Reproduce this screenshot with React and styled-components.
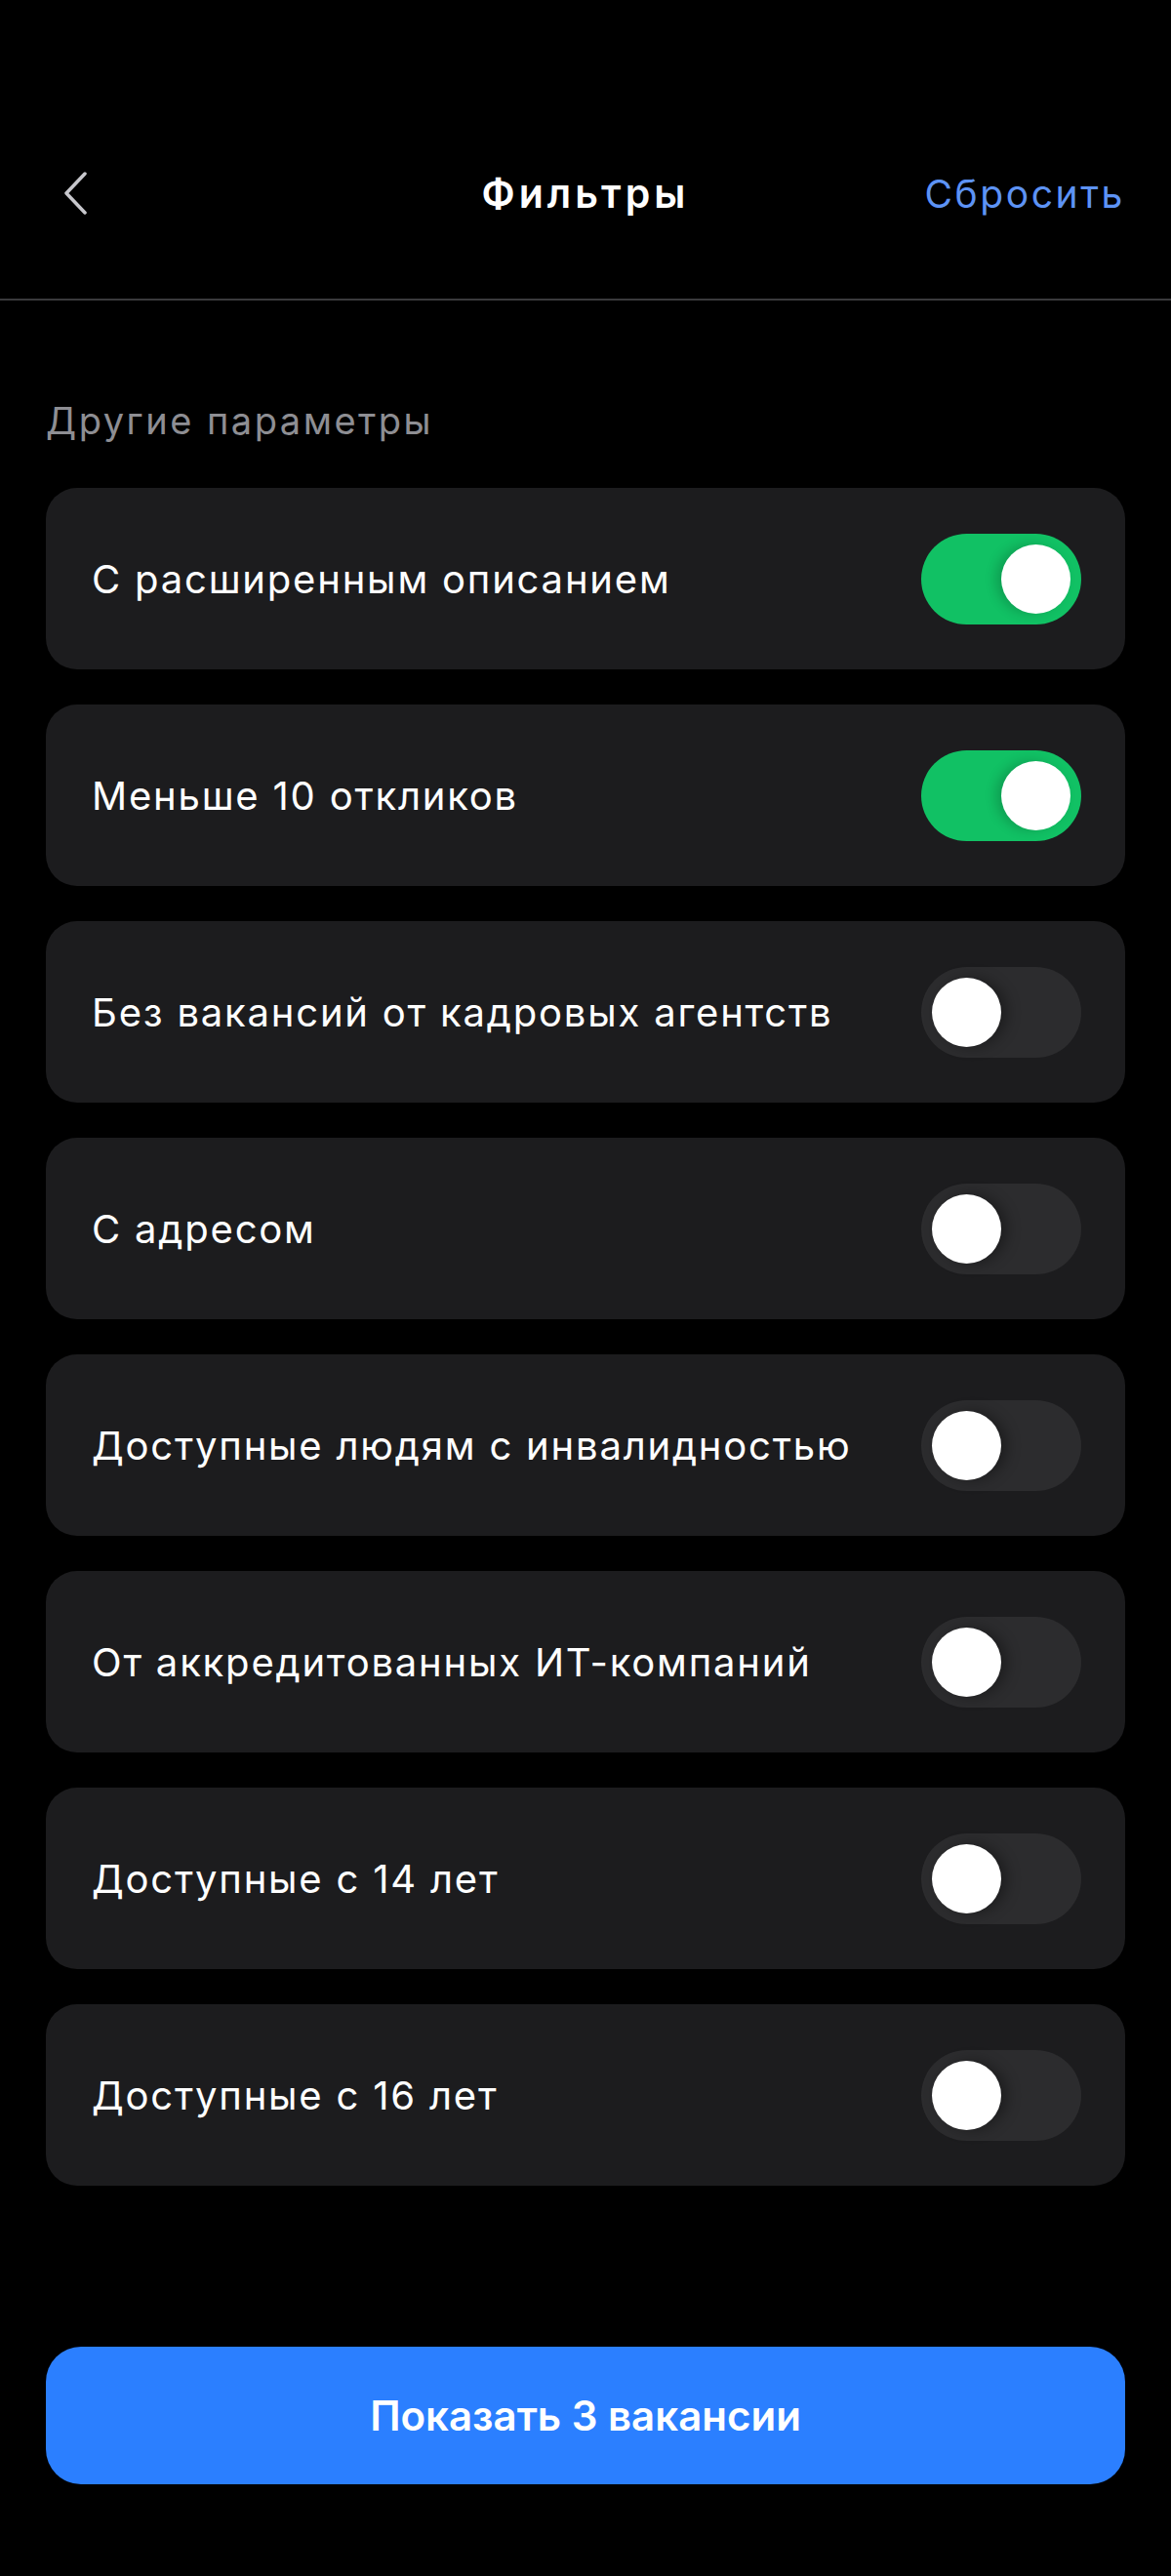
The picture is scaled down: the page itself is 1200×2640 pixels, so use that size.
import React, { useState } from "react";
import styled, { createGlobalStyle } from "styled-components";

const Global = createGlobalStyle`
  html, body { margin: 0; padding: 0; background: #000; }
  body { font-family: Inter, "Noto Sans", sans-serif; -webkit-font-smoothing: antialiased; }
  * { box-sizing: border-box; }
`;

const Page = styled.div`
  width: 1200px;
  min-height: 2640px;
  background: #000;
  color: #fff;
  display: flex;
  flex-direction: column;
`;

const Header = styled.header`
  height: 308px;
  padding: 90px 47px 0;
  border-bottom: 2px solid #3a3a3c;
  display: grid;
  grid-template-columns: 1fr auto 1fr;
  align-items: center;
`;

const BackButton = styled.button`
  justify-self: start;
  background: none;
  border: 0;
  padding: 0 0 0 18px;
  display: flex;
  align-items: center;
  cursor: pointer;
`;

const Title = styled.h1`
  margin: 0;
  font-size: 41px;
  font-weight: 600;
  color: #fff;
  letter-spacing: 4px;
`;

const Reset = styled.button`
  justify-self: end;
  background: none;
  border: 0;
  padding: 0;
  font-family: inherit;
  font-size: 39px;
  font-weight: 400;
  letter-spacing: 2.6px;
  color: #5d93f5;
  cursor: pointer;
`;

const Content = styled.main`
  padding: 101px 47px 0 47px;
  display: flex;
  flex-direction: column;
`;

const SectionLabel = styled.div`
  font-size: 38px;
  line-height: 44px;
  letter-spacing: 2.5px;
  color: #8e8e93;
  margin-bottom: 47px;
`;

const List = styled.div`
  display: flex;
  flex-direction: column;
  gap: 36px;
`;

const Card = styled.label`
  height: 186px;
  border-radius: 32px;
  background: #1c1c1e;
  padding: 0 45px 0 47px;
  display: flex;
  align-items: center;
  justify-content: space-between;
  cursor: pointer;
`;

const CardText = styled.span`
  font-size: 40px;
  letter-spacing: 1.8px;
  color: #fff;
`;

const Track = styled.span`
  width: 164px;
  height: 93px;
  border-radius: 47px;
  background: ${(p) => (p.$on ? "#11c164" : "#2c2c2e")};
  padding: 11px;
  display: flex;
  justify-content: ${(p) => (p.$on ? "flex-end" : "flex-start")};
  align-items: center;
  flex-shrink: 0;
`;

const Knob = styled.span`
  width: 71px;
  height: 71px;
  border-radius: 50%;
  background: #fff;
  box-shadow: ${(p) =>
    p.$on ? "-6px 0 12px rgba(0,0,0,0.18)" : "6px 0 14px rgba(0,0,0,0.35)"};
`;

const ShowButton = styled.button`
  margin-top: 165px;
  height: 141px;
  border: 0;
  border-radius: 36px;
  background: #2b7fff;
  color: #fff;
  font-family: inherit;
  font-size: 42px;
  font-weight: 600;
  cursor: pointer;
`;

const items = [
  ["С расширенным описанием", true],
  ["Меньше 10 откликов", true],
  ["Без вакансий от кадровых агентств", false],
  ["С адресом", false],
  ["Доступные людям с инвалидностью", false],
  ["От аккредитованных ИТ-компаний", false],
  ["Доступные с 14 лет", false],
  ["Доступные с 16 лет", false],
];

export default function App() {
  const [state, setState] = useState(items.map((i) => i[1]));
  return (
    <Page>
      <Global />
      <Header>
        <BackButton aria-label="Назад">
          <svg width="26" height="44" viewBox="0 0 26 44" fill="none">
            <path d="M22 2 L3 22 L22 42" stroke="#c7c7cc" strokeWidth="3.5" strokeLinecap="round" strokeLinejoin="round" />
          </svg>
        </BackButton>
        <Title>Фильтры</Title>
        <Reset>Сбросить</Reset>
      </Header>
      <Content>
        <SectionLabel>Другие параметры</SectionLabel>
        <List>
          {items.map(([text], i) => (
            <Card
              key={text}
              onClick={() => setState((s) => s.map((v, j) => (j === i ? !v : v)))}
            >
              <CardText>{text}</CardText>
              <Track $on={state[i]}>
                <Knob $on={state[i]} />
              </Track>
            </Card>
          ))}
        </List>
        <ShowButton>Показать 3 вакансии</ShowButton>
      </Content>
    </Page>
  );
}
